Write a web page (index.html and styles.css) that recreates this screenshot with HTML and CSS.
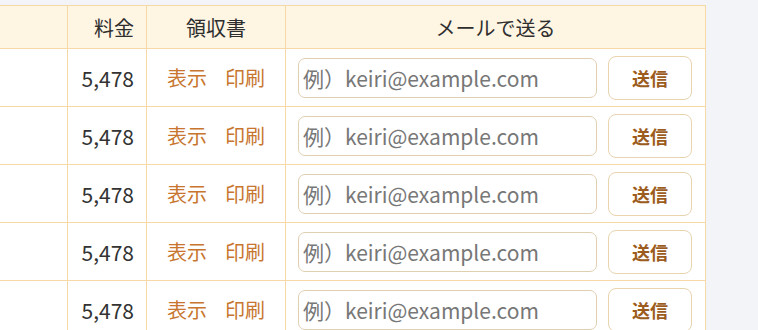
FILE: index.html
```html
<!DOCTYPE html>
<html>
<head>
    <title>領収書一覧</title>
    <link rel="stylesheet" href="styles.css">
</head>
<body>
    <div class="table-wrap">
        <table class="receipts">
            <thead>
                <tr>
                    <th class="col-name"></th>
                    <th class="col-price">料金</th>
                    <th class="col-receipt">領収書</th>
                    <th class="col-mail">メールで送る</th>
                </tr>
            </thead>
            <tbody>
                <tr>
                    <td class="col-name"></td>
                    <td class="col-price">5,478</td>
                    <td class="col-receipt"><a href="#">表示</a><a href="#">印刷</a></td>
                    <td class="col-mail"><div class="mail-form"><input type="email" placeholder="例）keiri@example.com"><button>送信</button></div></td>
                </tr>
                <tr>
                    <td class="col-name"></td>
                    <td class="col-price">5,478</td>
                    <td class="col-receipt"><a href="#">表示</a><a href="#">印刷</a></td>
                    <td class="col-mail"><div class="mail-form"><input type="email" placeholder="例）keiri@example.com"><button>送信</button></div></td>
                </tr>
                <tr>
                    <td class="col-name"></td>
                    <td class="col-price">5,478</td>
                    <td class="col-receipt"><a href="#">表示</a><a href="#">印刷</a></td>
                    <td class="col-mail"><div class="mail-form"><input type="email" placeholder="例）keiri@example.com"><button>送信</button></div></td>
                </tr>
                <tr>
                    <td class="col-name"></td>
                    <td class="col-price">5,478</td>
                    <td class="col-receipt"><a href="#">表示</a><a href="#">印刷</a></td>
                    <td class="col-mail"><div class="mail-form"><input type="email" placeholder="例）keiri@example.com"><button>送信</button></div></td>
                </tr>
                <tr>
                    <td class="col-name"></td>
                    <td class="col-price">5,478</td>
                    <td class="col-receipt"><a href="#">表示</a><a href="#">印刷</a></td>
                    <td class="col-mail"><div class="mail-form"><input type="email" placeholder="例）keiri@example.com"><button>送信</button></div></td>
                </tr>
            </tbody>
        </table>
    </div>
</body>
</html>
```

FILE: styles.css
```css
body { margin: 0; background: #f3f4f8; font-family: "Noto Sans CJK JP", "Noto Sans", sans-serif; color: #333; }
.table-wrap { padding-top: 5px; }
.receipts { border-collapse: collapse; table-layout: fixed; width: 706px; background: #fff; font-size: 20px; }
.receipts th, .receipts td { border: 1px solid #f6d9a6; padding: 0 12px; }
.receipts th { background: #fef5e3; font-weight: normal; height: 42px; text-align: center; color: #2e2e2e; }
.receipts td { height: 57px; }
.receipts .col-name { width: 67px; border-left: none; padding: 0; }
.receipts .col-price { width: 54px; text-align: right; }
.receipts td.col-price { font-size: 21px; }
.receipts .col-receipt { width: 114px; text-align: center; }
.receipts td.col-mail { padding: 0 12px; }
.receipts a { color: #c8762f; text-decoration: none; }
.receipts a + a { margin-left: 18px; }
.mail-form { display: flex; align-items: center; gap: 11px; }
.mail-form input { box-sizing: border-box; width: 299px; height: 40px; border: 1px solid #e0d0b2; border-radius: 7px; padding: 0 4px; font: inherit; font-size: 21px; color: #333; }
.mail-form input::placeholder { color: #777; }
.mail-form button { box-sizing: border-box; width: 84px; height: 44px; background: #fff; border: 1px solid #e8d4ae; border-radius: 8px; font: inherit; font-size: 18px; font-weight: bold; color: #9c5c1d; cursor: pointer; }
```
